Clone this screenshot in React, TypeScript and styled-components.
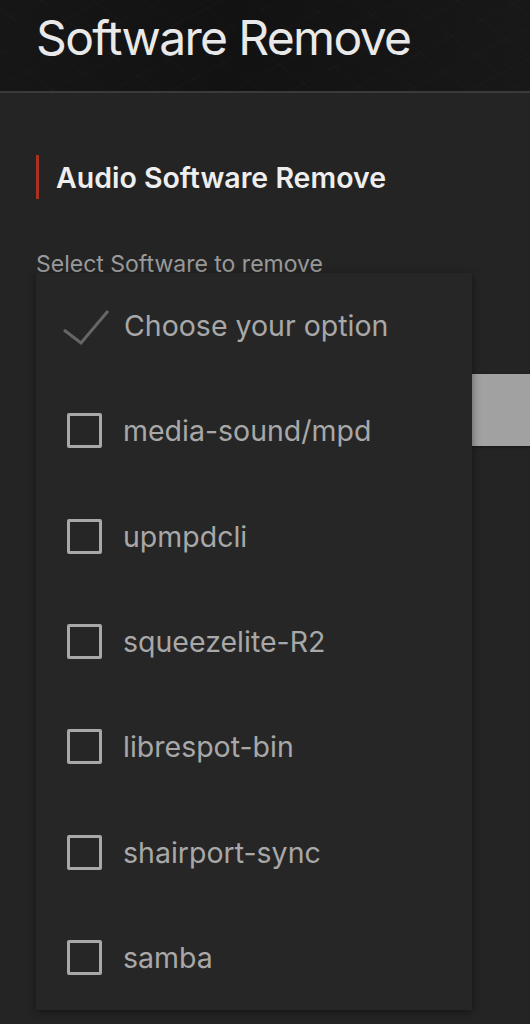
import * as React from "react"
import styled, { createGlobalStyle } from "styled-components"

const GlobalStyle = createGlobalStyle`
  html, body {
    margin: 0;
    padding: 0;
    background: #242424;
    font-family: Inter, "Noto Sans", sans-serif;
  }
  * { box-sizing: border-box; }
`

const Page = styled.div`
  width: 530px;
  height: 1024px;
  overflow: hidden;
  background: #242424;
`

const Header = styled.header`
  height: 93px;
  padding: 8px 36px 0;
  background:
    repeating-linear-gradient(-28deg, rgba(255,255,255,0.008) 0 2px, transparent 2px 28px),
    repeating-linear-gradient(38deg, rgba(255,255,255,0.008) 0 2px, transparent 2px 32px),
    linear-gradient(90deg, #161616, #121212 45%, #181818);
  border-bottom: 2px solid #3a3a3a;
`

const Title = styled.h1`
  margin: 0;
  font-size: 48px;
  font-weight: 400;
  line-height: 60px;
  color: #e9e9e9;
  letter-spacing: -1.65px;
`

const Content = styled.main`
  padding: 62px 0 0 36px;
`

const SectionTitle = styled.h2`
  margin: 0;
  height: 44px;
  display: flex;
  align-items: center;
  padding-left: 17px;
  border-left: 3.5px solid #a8321f;
  font-size: 28.5px;
  font-weight: 600;
  color: #eeeeee;
`

const FieldLabel = styled.label`
  display: block;
  margin-top: 50px;
  font-size: 23px;
  line-height: 30px;
  color: #9a9a9a;
`

const Field = styled.div`
  position: relative;
`

const GreyButton = styled.div`
  position: absolute;
  left: 436px;
  top: 101px;
  width: 80px;
  height: 72px;
  background: #a1a1a1;
  box-shadow: 0 1px 3px rgba(0,0,0,0.4);
`

const Menu = styled.ul`
  position: relative;
  z-index: 1;
  margin: -6px 0 0;
  padding: 0;
  list-style: none;
  width: 436px;
  background: #262626;
  box-shadow: 0 2px 8px rgba(0,0,0,0.45);
`

const Option = styled.li`
  height: 105.3px;
  display: flex;
  align-items: center;
  padding-left: 31px;
  gap: 21px;
  font-size: 28.5px;
  color: #a8a8a8;
`

const Box = styled.span`
  width: 35px;
  height: 35px;
  border: 3px solid #a8a8a8;
  border-radius: 2px;
  flex: none;
`

const Check = styled.svg`
  width: 48px;
  height: 40px;
  margin-left: -4px;
  margin-right: -8px;
  flex: none;
`

const software = [
  "media-sound/mpd",
  "upmpdcli",
  "squeezelite-R2",
  "librespot-bin",
  "shairport-sync",
  "samba",
]

export default function App() {
  return (
    <Page>
      <GlobalStyle />
      <Header>
        <Title>Software Remove</Title>
      </Header>
      <Content>
        <SectionTitle>Audio Software Remove</SectionTitle>
        <FieldLabel>Select Software to remove</FieldLabel>
        <Field>
          <GreyButton />
          <Menu>
            <Option>
              <Check viewBox="0 0 48 40">
                <path d="M1 24 L18 37 L45 5" fill="none" stroke="#666" strokeWidth="3" />
              </Check>
              Choose your option
            </Option>
            {software.map((name) => (
              <Option key={name}>
                <Box />
                {name}
              </Option>
            ))}
          </Menu>
        </Field>
      </Content>
    </Page>
  )
}
